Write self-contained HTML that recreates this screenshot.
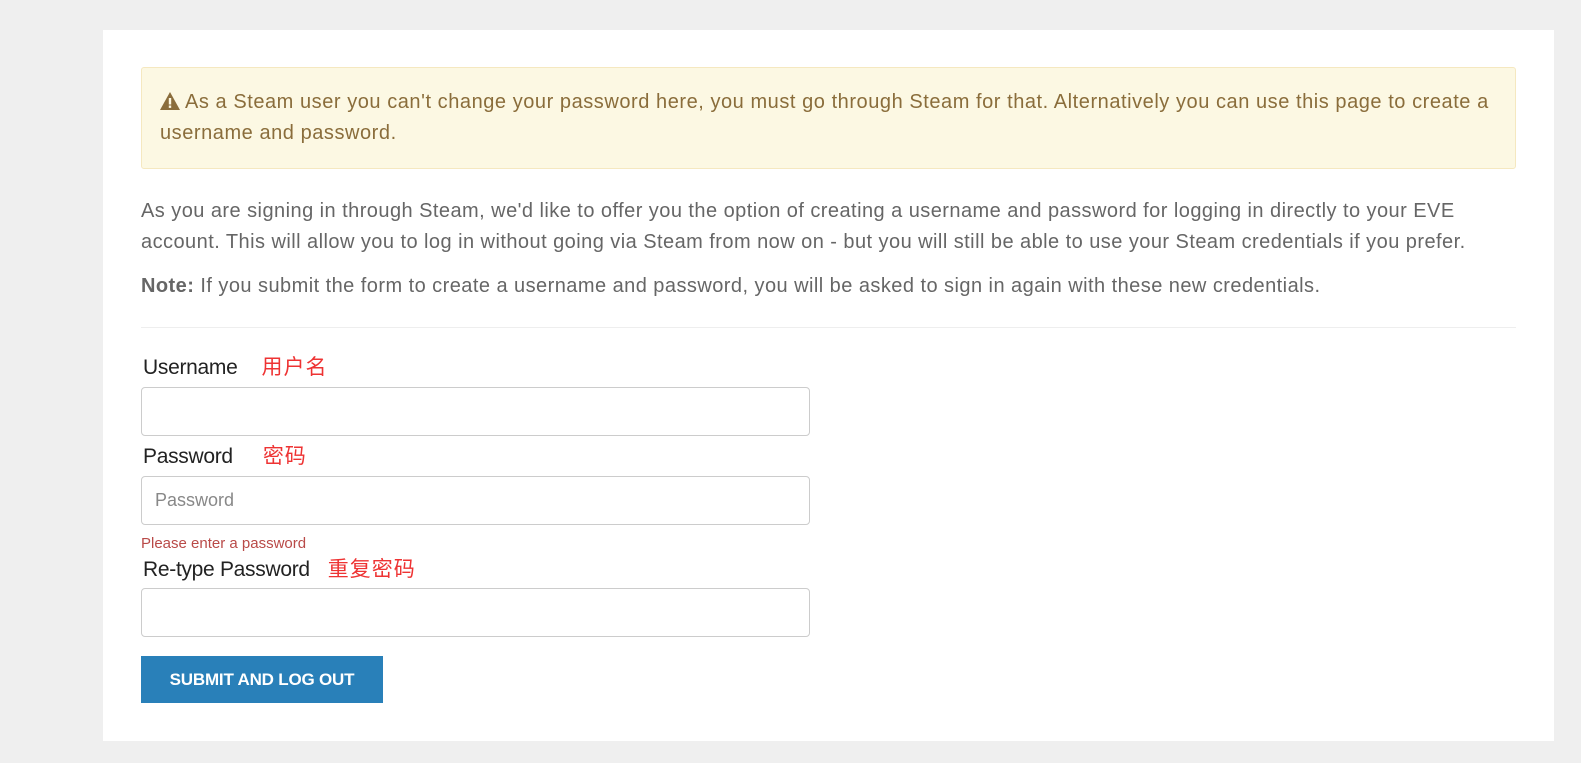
<!DOCTYPE html><html><head><meta charset="utf-8"><style>
body{margin:0;background:#efefef;width:1581px;height:763px;overflow:hidden;font-family:"Liberation Sans","Noto Sans CJK SC",sans-serif;}
.p{position:absolute;left:103px;top:30px;width:1451px;height:711px;background:#fff}
.a{position:absolute;left:141px;top:67px;width:1375px;height:102px;background:#fcf8e3;border:1px solid #f5e8c0;border-radius:3px;color:#8a6d3b;font-size:20px;letter-spacing:0.55px;line-height:31px;box-sizing:border-box;padding:19px 18px;white-space:nowrap}
.t{position:absolute;left:141px;color:#666;font-size:20px;letter-spacing:0.45px;line-height:31px;white-space:nowrap}
.hr{position:absolute;left:141px;top:327px;width:1375px;height:1px;background:#eee}
.l{position:absolute;left:143px;font-size:21px;color:#222;letter-spacing:-0.3px}
.l span{color:#e33;margin-left:24px;font-size:21px;letter-spacing:1px}
.i{position:absolute;left:141px;width:669px;height:49px;border:1px solid #ccc;border-radius:4px;box-sizing:border-box;color:#888;font-size:18px;padding:13px 13px}
.b{position:absolute;left:141px;top:656px;width:242px;height:47px;background:#2980b9;color:#fff;font-weight:bold;font-size:17px;text-align:center;line-height:47px;letter-spacing:-0.2px}
</style></head><body>
<div class="p"></div>
<div class="a"><svg width="20" height="18" viewBox="0 0 20 18" style="vertical-align:-2px"><path d="M10 0L20 18H0Z" fill="#8a6d3b"/><rect x="8.8" y="6" width="2.4" height="6.5" fill="#fcf8e3"/><rect x="8.8" y="13.5" width="2.4" height="2.4" fill="#fcf8e3"/></svg> As a Steam user you can't change your password here, you must go through Steam for that. Alternatively you can use this page to create a<br>username and password.</div>
<div class="t" style="top:196px">As you are signing in through Steam, we'd like to offer you the option of creating a username and password for logging in directly to your EVE<br>account. This will allow you to log in without going via Steam from now on - but you will still be able to use your Steam credentials if you prefer.</div>
<div class="t" style="top:271px"><b>Note:</b> If you submit the form to create a username and password, you will be asked to sign in again with these new credentials.</div>
<div class="hr"></div>
<div class="l" style="top:351px">Username<span>用户名</span></div>
<div class="i" style="top:387px"></div>
<div class="l" style="top:440px">Password<span style="margin-left:30px">密码</span></div>
<div class="i" style="top:476px">Password</div>
<div style="position:absolute;left:141px;top:535px;font-size:15px;color:#b94a48">Please enter a password</div>
<div class="l" style="top:553px">Re-type Password<span style="margin-left:18px">重复密码</span></div>
<div class="i" style="top:588px"></div>
<div class="b">SUBMIT AND LOG OUT</div>
</body></html>
